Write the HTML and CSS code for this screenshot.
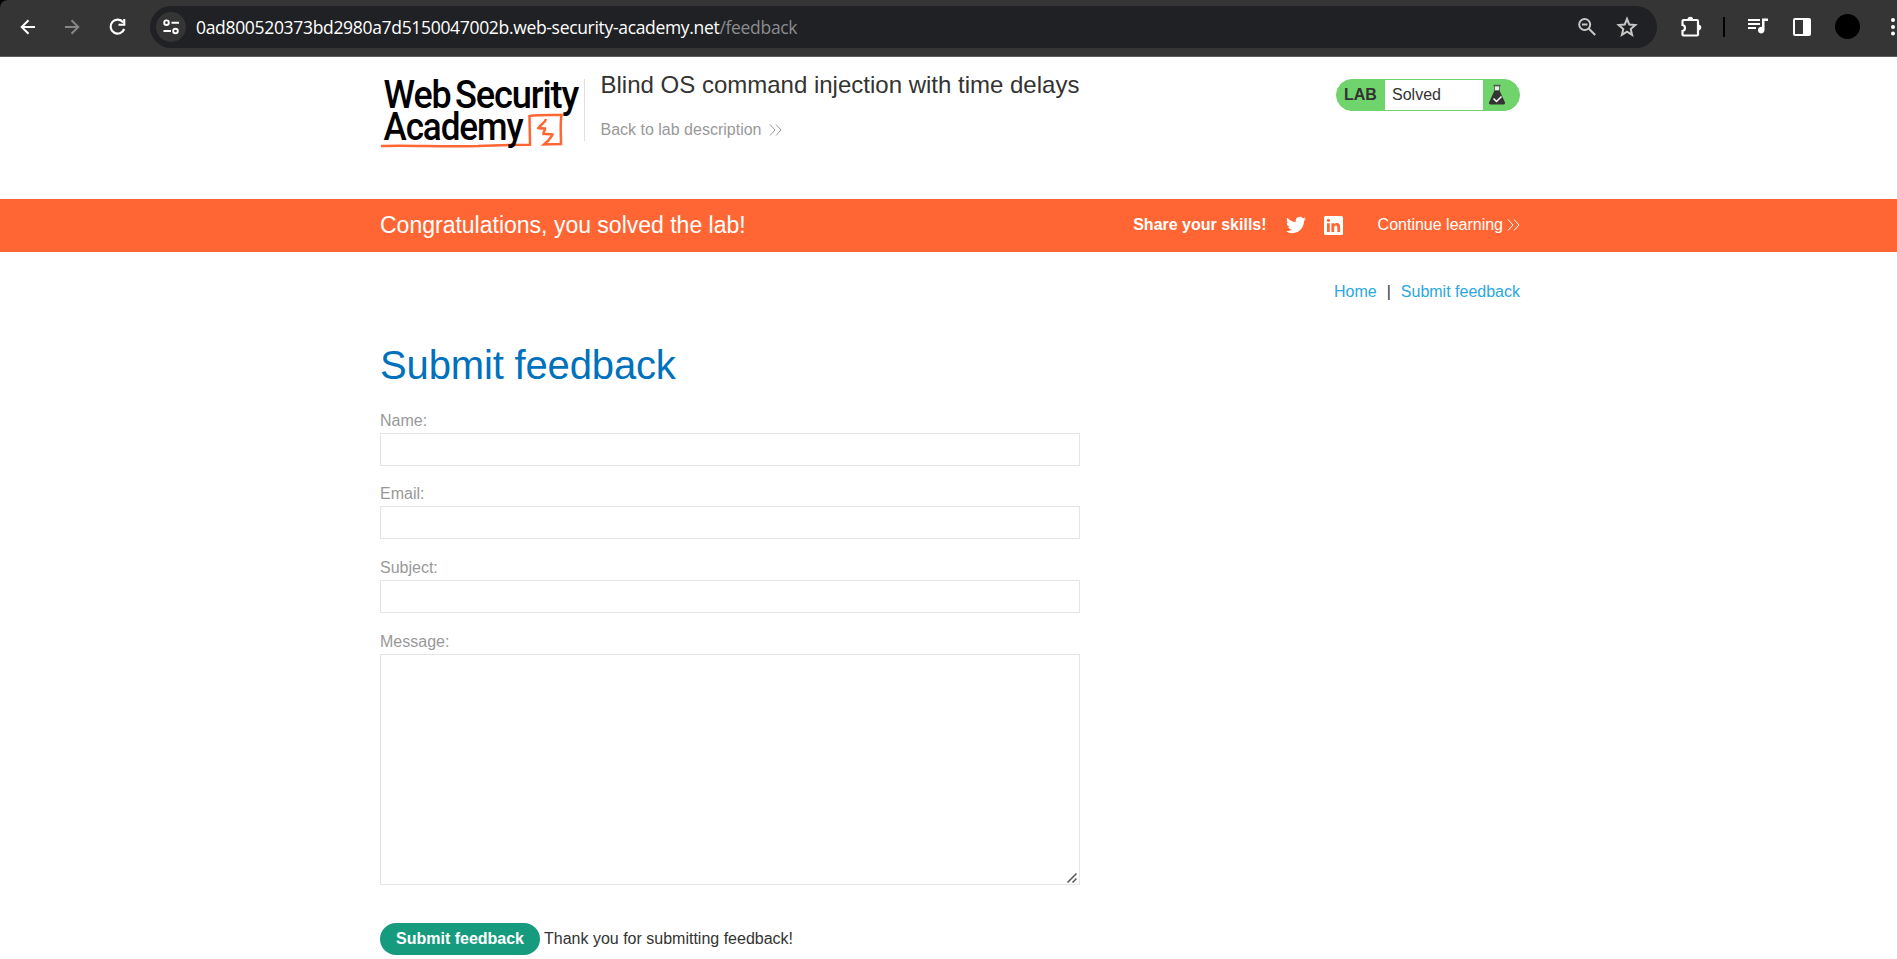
FILE: index.html
```html
<!DOCTYPE html>
<html lang="en">
<head>
    <meta charset="UTF-8">
    <meta name="viewport" content="width=device-width, initial-scale=1.0">
    <title>Blind OS command injection with time delays</title>
    <link rel="stylesheet" href="styles.css">
</head>
<body>
    <div class="browser-corner">
    <div class="browser-bar">
        <svg class="icon-back" width="20" height="20" viewBox="0 0 20 20"><path d="M18 10H5M11.500 3.200L4.700 10l6.800 6.800" fill="none" stroke="#fff" stroke-width="2"/></svg>
        <svg class="icon-forward" width="20" height="20" viewBox="0 0 20 20"><path d="M2 10h13M8.500 3.200L15.300 10l-6.800 6.800" fill="none" stroke="#868686" stroke-width="2"/></svg>
        <svg class="icon-reload" width="20" height="20" viewBox="0 0 20 20"><path d="M15.200 5.300A7 7 0 1 0 16.200 12" fill="none" stroke="#fff" stroke-width="2.200"/><path d="M17.300 2v6.800H10.500V6.700h4.700V2z" fill="#fff"/></svg>
        <div class="address-bar">
            <div class="site-info">
                <svg width="18" height="18" viewBox="0 0 18 18" fill="none" stroke="#fff" stroke-width="1.900"><circle cx="4.500" cy="4.700" r="2.300"/><path d="M9.500 4.700H17M1.500 13H9"/><circle cx="13.500" cy="13" r="2.300"/></svg>
            </div>
            <div class="url">0ad800520373bd2980a7d5150047002b.web-security-academy.net<span>/feedback</span></div>
            <svg class="icon-zoom" width="20" height="20" viewBox="0 0 20 20" fill="none" stroke="#c7c7c7" stroke-width="2"><circle cx="7.700" cy="7.500" r="5.500"/><path d="M11.700 11.500l6.500 6.500M5 7.500h5.400"/></svg>
            <svg class="icon-star" width="22" height="22" viewBox="0 0 22 22"><path d="M11 3l2.300 5.600 6 .5-4.600 3.900 1.400 5.900-5.100-3.200-5.100 3.200 1.400-5.900-4.600-3.900 6-.5z" fill="none" stroke="#c7c7c7" stroke-width="2"/></svg>
        </div>
        <svg class="icon-extensions" width="22" height="22" viewBox="0 0 22 22"><path d="M3.500 4H17a1 1 0 0 1 1 1V18.500a1 1 0 0 1-1 1H3.500a1 1 0 0 1-1-1v-3.500c3.300-.6 3.300-5.400 0-6V5a1 1 0 0 1 1-1z" fill="none" stroke="#fff" stroke-width="2.200"/><path d="M7.500 3.500a2.800 2.800 0 0 1 5.600 0zM18.500 8.700a2.800 2.800 0 0 1 0 5.600z" fill="#fff"/></svg>
        <div class="bar-divider"></div>
        <svg class="icon-media" width="22" height="20" viewBox="0 0 22 20"><path d="M1 3h12M1 7h12M1 11h8" stroke="#fff" stroke-width="2"/><path d="M15 1.500h6v2.600h-3.500v8.900a3.300 3.300 0 1 1-2.500-3.100z" fill="#fff"/></svg>
        <svg class="icon-panel" width="20" height="20" viewBox="0 0 20 20"><rect x="2" y="2" width="16" height="16" rx="1" fill="none" stroke="#fff" stroke-width="2"/><path d="M11 2h7v16h-7z" fill="#fff"/></svg>
        <div class="avatar"></div>
        <svg class="icon-menu" width="6" height="20" viewBox="0 0 6 20" fill="#fff"><circle cx="3" cy="3" r="2"/><circle cx="3" cy="10" r="2"/><circle cx="3" cy="16.500" r="2"/></svg>
    </div>
    </div>

    <header class="lab-header container">
        <svg class="logo" width="206" height="80" viewBox="0 0 206 80">
            <g class="logo-text">
                <text x="3.500" y="37" textLength="67" lengthAdjust="spacingAndGlyphs">Web</text>
                <text x="75" y="37" textLength="123" lengthAdjust="spacingAndGlyphs">Security</text>
            </g>
            <path d="M1 75C30 74 60 76 98 75C115 74 130 73.800 150 73.800L149.500 45C160 43.500 170 44 181.500 44C180 53 181 62 181 73L164 73.500L168.500 69.500C169.500 67 172 65.500 172.500 63.500C169 62.500 165 63 163.500 63C163 60 165.500 60 165 57.500C162 57.500 160 57.500 158.500 57C161 53 165 52 166 48" fill="none" stroke="#ff6633" stroke-width="2.500"/>
            <text class="logo-text" x="3.500" y="69" textLength="139" lengthAdjust="spacingAndGlyphs">Academy</text>
        </svg>
        <div class="title-block">
            <h2>Blind OS command injection with time delays</h2>
            <a class="back-link">Back to lab description
                <svg width="13" height="12" viewBox="0 0 13 12"><path d="M1 .5L6 6l-5 5.500M7 .5L12 6l-5 5.500" fill="none" stroke="#999" stroke-width="1"/></svg>
            </a>
        </div>
        <div class="lab-status">
            <span class="lab-label">LAB</span>
            <span class="lab-state">Solved</span>
            <svg width="18" height="22" viewBox="0 0 18 22"><path d="M5.500 1.500h7" stroke="#555" stroke-width="1.500"/><path d="M6.500 2h5v5h-5z" fill="#e4f3e4" stroke="#555" stroke-width=".8"/><path d="M6.500 6.500h5L17 18.500q.5 2-1.500 2h-13q-2 0-1.500-2z" fill="#333"/><path d="M5.500 14.500l3 3 5-5" fill="none" stroke="#fff" stroke-width="1.500"/></svg>
        </div>
    </header>

    <section class="solved-banner">
        <div class="container banner-row">
            <h4>Congratulations, you solved the lab!</h4>
            <span class="share">Share your skills!</span>
            <svg class="twitter" width="20" height="20" viewBox="0 0 24 24"><path fill="#fff" d="M23.953 4.570a10 10 0 0 1-2.825.775 4.958 4.958 0 0 0 2.163-2.723c-.951.555-2.005.959-3.127 1.184a4.920 4.920 0 0 0-8.384 4.482C7.690 8.095 4.067 6.130 1.640 3.162a4.822 4.822 0 0 0-.666 2.475c0 1.710.870 3.213 2.188 4.096a4.904 4.904 0 0 1-2.228-.616v.06a4.923 4.923 0 0 0 3.946 4.827 4.996 4.996 0 0 1-2.212.085 4.936 4.936 0 0 0 4.604 3.417 9.867 9.867 0 0 1-6.102 2.105c-.390 0-.779-.023-1.170-.067a13.995 13.995 0 0 0 7.557 2.209c9.053 0 13.998-7.496 13.998-13.985 0-.210 0-.420-.015-.630A9.935 9.935 0 0 0 24 4.590z"/></svg>
            <svg class="linkedin" width="19" height="19" viewBox="0 0 19 19"><rect width="19" height="19" rx="1.500" fill="#fff"/><g fill="#ff6633"><circle cx="4.400" cy="4.300" r="1.600"/><path d="M3 7.200h2.800V16H3zM7.400 7.200h2.700v1.200c.5-.8 1.400-1.400 2.700-1.400 2.700 0 3.300 1.800 3.300 4.100V16h-2.800v-4.300c0-1 0-2.300-1.500-2.300s-1.600 1.100-1.600 2.200V16H7.400z"/></g></svg>
            <a class="continue">Continue learning <svg width="13" height="12" viewBox="0 0 13 12"><path d="M1 .5L6 6l-5 5.500M7 .5L12 6l-5 5.500" fill="none" stroke="#fff" stroke-width="1"/></svg></a>
        </div>
    </section>

    <main class="container">
        <nav class="top-links">
            <a>Home</a><span>|</span><a>Submit feedback</a>
        </nav>
        <h1>Submit feedback</h1>
        <form class="feedback-form">
            <div class="field">
                <label for="name">Name:</label>
                <input type="text" id="name">
            </div>
            <div class="field">
                <label for="email">Email:</label>
                <input type="text" id="email">
            </div>
            <div class="field">
                <label for="subject">Subject:</label>
                <input type="text" id="subject">
            </div>
            <div class="field message">
                <label for="message">Message:</label>
                <textarea id="message"></textarea>
                <svg class="grip" width="10" height="10" viewBox="0 0 10 10"><path d="M.5 9.500l9-9M5.500 9.500l4-4" stroke="#555" stroke-width="1.500"/></svg>
            </div>
            <div class="submit-row">
                <button type="button">Submit feedback</button>
                <span>Thank you for submitting feedback!</span>
            </div>
        </form>
    </main>
</body>
</html>
```

FILE: styles.css
```css
* {
    box-sizing: border-box;
}

body {
    margin: 0;
    height: 959px;
    overflow: hidden;
    font-family: "Liberation Sans", Arial, sans-serif;
    font-size: 16px;
    color: #333332;
    background-color: #fff;
}

svg {
    display: block;
    flex: none;
}

.container {
    width: 1140px;
    margin-left: 380px;
}

/* browser toolbar */
.browser-corner {
    background-color: #000;
}

.browser-bar {
    display: flex;
    align-items: center;
    height: 57px;
    padding: 0 0 3px 17px;
    background-color: #353535;
    border-bottom: 1px solid #5c5c5c;
    border-top-left-radius: 8px;
}

.icon-forward {
    margin-left: 26px;
}

.icon-reload {
    margin-left: 25px;
}

.address-bar {
    display: flex;
    align-items: center;
    width: 1507px;
    height: 42px;
    margin-left: 22px;
    padding-left: 6px;
    border-radius: 21px;
    background-color: #202124;
}

.site-info {
    display: flex;
    align-items: center;
    justify-content: center;
    width: 30px;
    height: 30px;
    border-radius: 50%;
    background-color: #353535;
}

.url {
    margin-left: 10px;
    padding-top: 1px;
    font-family: "Open Sans", "Noto Sans", sans-serif;
    font-size: 17.5px;
    letter-spacing: -0.32px;
    white-space: nowrap;
    color: #fff;
}

.url span {
    color: #8a8c90;
}

.icon-zoom {
    margin-left: auto;
}

.icon-star {
    margin: 0 19px 0 19px;
}

.icon-extensions {
    margin-left: 23px;
}

.bar-divider {
    width: 2px;
    height: 20px;
    margin-left: 21px;
    background-color: #000;
}

.icon-media {
    margin-left: 22px;
}

.icon-panel {
    margin-left: 23px;
}

.avatar {
    width: 25px;
    height: 25px;
    margin-left: 23px;
    border-radius: 50%;
    background-color: #000;
}

.icon-menu {
    margin-left: 30px;
}

/* lab header */
.lab-header {
    display: flex;
    align-items: flex-start;
    height: 142px;
}

.logo {
    margin-top: 14px;
    overflow: visible;
}

.logo-text {
    font-family: Roboto, sans-serif;
    font-size: 38px;
    font-weight: 500;
    letter-spacing: -1.2px;
    fill: #000;
}

.title-block {
    height: 62px;
    margin-top: 22px;
    margin-left: -2px;
    padding-left: 15.5px;
    border-left: 1px solid #e0e0e0;
}

.title-block h2 {
    margin: -8px 0 0;
    font-size: 24px;
    font-weight: normal;
    line-height: 28px;
}

.back-link {
    display: flex;
    align-items: center;
    gap: 8px;
    margin-top: 22px;
    line-height: 18px;
    color: #999;
}

.lab-status {
    display: flex;
    align-items: center;
    width: 184px;
    height: 32px;
    margin-top: 22px;
    margin-left: auto;
    border: 1px solid #70d46c;
    border-radius: 16px;
    background-color: #70d46c;
}

.lab-label {
    width: 48px;
    padding-left: 7px;
    font-weight: bold;
}

.lab-state {
    width: 98px;
    height: 30px;
    margin-right: 5px;
    padding-left: 7px;
    line-height: 30px;
    background-color: #fff;
}

/* orange banner */
.solved-banner {
    height: 53px;
    background-color: #ff6633;
    color: #fff;
}

.banner-row {
    display: flex;
    align-items: center;
    height: 52px;
}

.banner-row h4 {
    margin: 0;
    font-size: 23px;
    font-weight: normal;
}

.share {
    margin-left: auto;
    font-weight: bold;
}

.twitter {
    margin-left: 19px;
}

.linkedin {
    margin-left: 18px;
}

.continue {
    display: flex;
    align-items: center;
    gap: 4px;
    margin-left: 35px;
}

/* page */
.top-links {
    display: flex;
    justify-content: flex-end;
    margin-top: 31px;
    line-height: 18px;
}

.top-links a {
    color: #29a7e1;
}

.top-links span {
    margin: 0 10px;
}

h1 {
    margin: 41px 0 0;
    font-size: 40px;
    font-weight: normal;
    line-height: 46px;
    letter-spacing: -0.15px;
    color: #0071bc;
}

.feedback-form {
    width: 700px;
    margin-top: 24px;
}

.field {
    margin-bottom: 19.4px;
}

.field label {
    display: block;
    height: 21px;
    line-height: 18px;
    color: #999;
}

.field input,
.field textarea {
    display: block;
    width: 100%;
    height: 33px;
    padding: 5px;
    border: 1px solid #e4e4e4;
    background-color: #fff;
}

.field textarea {
    height: 231px;
    resize: none;
}

.message {
    position: relative;
    padding-top: 0.8px;
}

.grip {
    position: absolute;
    right: 3px;
    bottom: 2px;
}

.submit-row {
    display: flex;
    align-items: center;
    gap: 4px;
    margin-top: 38px;
}

.submit-row button {
    width: 160px;
    height: 32px;
    padding: 0;
    border: none;
    border-radius: 16px;
    font-family: inherit;
    font-size: 16px;
    font-weight: bold;
    background-color: #179b7f;
    color: #fff;
}
```
